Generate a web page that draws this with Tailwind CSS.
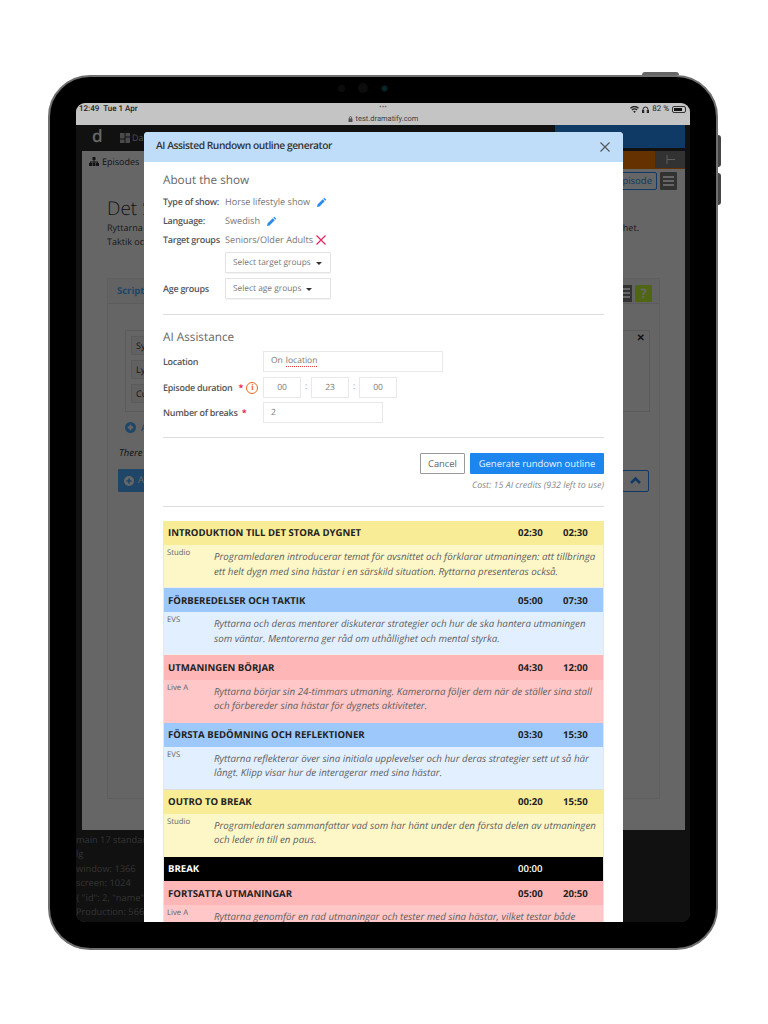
<!DOCTYPE html>
<html lang="en">
<head>
  <meta charset="UTF-8">
  <title>Dramatify on iPad</title>
  <script src="https://cdn.jsdelivr.net/npm/@tailwindcss/browser@4"></script>
</head>
<body class="bg-white font-['Open_Sans',sans-serif] overflow-hidden [text-rendering:geometricPrecision]">
<div class="w-[768px] h-[1024px] pt-[75px] pl-[48px]">
  <!-- device -->
  <div class="relative w-[670px] h-[875px] rounded-[42px] bg-black border-2 border-[#6f6f6f] p-[26px]">
    <div class="absolute -top-[5px] left-[592px] w-[37px] h-[3px] bg-[#666] rounded-t-sm"></div>
    <div class="absolute -right-[5px] top-[58px] w-[3px] h-[32px] bg-[#444] rounded-r-sm"></div>
    <div class="absolute -right-[5px] top-[96px] w-[3px] h-[32px] bg-[#444] rounded-r-sm"></div>
    <div class="absolute top-[6px] left-[288px] flex items-center gap-[13px]">
      <div class="w-[7px] h-[7px] rounded-full bg-[#0c0c0c]"></div>
      <div class="w-[10px] h-[10px] rounded-full bg-[#0c0c0c]"></div>
      <div class="w-[7px] h-[7px] rounded-full bg-[#06282c] border border-[#0d0d0d]"></div>
    </div>

    <!-- screen -->
    <div class="relative w-[614px] h-[819px] rounded-[9px] overflow-hidden bg-[#343434] flex flex-col">
      <!-- ipad status bar -->
      <div class="h-[22px] bg-[#c4c4c4] relative shrink-0 text-[#222]">
        <div class="absolute left-[3px] top-0 text-[8px] leading-[11px] font-medium font-['Roboto',sans-serif]">12:49&nbsp;&nbsp;Tue 1 Apr</div>
        <div class="absolute left-0 right-0 top-0 text-center text-[7px] leading-[10px] text-[#666]">•••</div>
        <div class="absolute left-0 right-0 top-[10px] flex justify-center items-center gap-[3px] text-[7.5px] leading-[11px] font-['Roboto',sans-serif] text-[#444]">
          <svg class="w-[5px] h-[6px]" viewBox="0 0 10 12" fill="#555"><path d="M2 5V3.500a3 3 0 0 1 6 0V5h1v7H1V5zM3.500 5h3V3.500a1.500 1.500 0 0 0-3 0z"/></svg>
          <span>test.dramatify.com</span>
        </div>
        <div class="absolute right-[4px] top-[1px] flex items-center gap-[3px] text-[8px] leading-[10px] font-['Roboto',sans-serif]">
          <svg class="w-[9px] h-[7px]" viewBox="0 0 18 14" fill="#222"><path d="M9 14l-2.500-3a3.500 3.500 0 0 1 5 0zM4.800 9L3 7a8.500 8.500 0 0 1 12 0l-1.800 2a6 6 0 0 0-8.400 0zM1.800 5.500L0 3.500a12.500 12.500 0 0 1 18 0l-1.800 2a10 10 0 0 0-14.400 0z"/></svg>
          <svg class="w-[7px] h-[7px]" viewBox="0 0 14 14" fill="none" stroke="#222" stroke-width="2"><path d="M2 11V7a5 5 0 0 1 10 0v4"/><rect x="1" y="9" width="2.500" height="4" fill="#222"/><rect x="10.500" y="9" width="2.500" height="4" fill="#222"/></svg>
          <span>82 %</span>
          <div class="w-[14px] h-[7px] rounded-[2px] border border-[#333] p-[1px]"><div class="w-[82%] h-full bg-[#111]"></div></div>
        </div>
      </div>

      <!-- app behind the dialog -->
      <div class="relative flex-1 bg-[#2b2b2b] text-[#333]">
        <!-- nav -->
        <div class="h-[23px] flex items-center bg-[#2b2b2b] pr-[5px]">
          <div class="w-[26px] text-center text-white text-[17px] leading-[23px] font-semibold pl-[16px] -mt-[2px]">d</div>
          <svg class="w-[10px] h-[10px] ml-[18px] mt-[2px]" viewBox="0 0 10 10" fill="#bbb"><rect width="4.500" height="5.500"/><rect x="5.500" width="4.500" height="3.500"/><rect y="6.500" width="4.500" height="3.500"/><rect x="5.500" y="4.500" width="4.500" height="5.500"/></svg>
          <span class="ml-[2px] mt-[2px] text-[9px] text-[#bbb]">Da</span>
          <div class="ml-auto w-[130px] h-full bg-[#2891ff]"></div>
        </div>
        <!-- page -->
        <div class="absolute left-[6px] top-[26px] w-[603px] h-[679px] bg-white">
          <div class="h-[18px] flex items-center">
            <svg class="w-[10px] h-[9px] ml-[7px] mt-[3px]" viewBox="0 0 20 18" fill="#333"><rect x="7" y="0" width="6" height="6"/><rect x="0" y="12" width="6" height="6"/><rect x="7" y="12" width="6" height="6"/><rect x="14" y="12" width="6" height="6"/><path d="M9 6h2v3h7v3h-2v-1h-5v1H9v-1H4v1H2V9h7z"/></svg>
            <span class="ml-[3px] mt-[3px] text-[9px]">Episodes</span>
            <div class="ml-auto w-[33px] h-full bg-[#ff7b00]"></div>
            <div class="w-[30px] h-full bg-[#7d7d7d] border-b border-[#ff7b00] flex items-center justify-center">
              <svg class="w-[9px] h-[9px]" viewBox="0 0 9 9" stroke="#eee" fill="none"><path d="M1 0v9M1 4.500h8"/></svg>
            </div>
          </div>
          <div class="flex justify-end items-center gap-[3px] pr-[8px] mt-[3px]">
            <div class="h-[18px] px-[4px] rounded-[2px] border border-[#2891ff] text-[#2891ff] text-[9.5px] leading-[16px]">New episode</div>
            <div class="w-[17px] h-[18px] bg-[#7d7d7d] rounded-[1px] flex flex-col justify-center items-center gap-[2px]">
              <div class="w-[11px] h-[2px] bg-white"></div><div class="w-[11px] h-[2px] bg-white"></div><div class="w-[11px] h-[2px] bg-white"></div>
            </div>
          </div>
          <div class="pl-[25px] mt-[5px]">
            <div class="text-[19px] leading-[26px] font-light">Det Stora Dygnet</div>
            <div class="w-[532px] text-[9px] leading-[14px] text-[#444] flex justify-between"><span>Ryttarna</span><span>enhet.</span></div>
            <div class="text-[9px] leading-[14px] text-[#444]">Taktik och</div>
          </div>
          <!-- script card -->
          <div class="mt-[29px] ml-[25px] w-[553px] h-[521px] border border-[#eee] bg-[#fdfdfd] relative">
            <div class="h-[25px] border-b border-[#e6e6e6] bg-[#f7f7f7] flex items-center pl-[9px] pr-[7px]">
              <span class="text-[9.500px] font-bold text-[#4fb0ff]">Script</span>
              <div class="ml-auto w-[14px] h-[17px] mt-[4px] bg-[#7d7d7d] flex flex-col justify-center items-center gap-[2px]">
                <div class="w-[10px] h-[2px] bg-white"></div><div class="w-[10px] h-[2px] bg-white"></div><div class="w-[10px] h-[2px] bg-white"></div>
              </div>
              <div class="ml-[3px] w-[17px] h-[17px] mt-[4px] bg-[#c8ff30] text-white text-[13px] leading-[17px] font-bold text-center">?</div>
            </div>
            <div class="ml-[17px] mt-[26px] w-[525px] h-[82px] border border-[#e3e3e3] relative p-[5px] flex flex-col gap-[5px]">
              <div class="h-[19px] w-[60px] bg-[#f3f3f3] border border-[#e3e3e3] text-[9px] leading-[17px] pl-[4px]">Sy</div>
              <div class="h-[19px] w-[60px] bg-[#f3f3f3] border border-[#e3e3e3] text-[9px] leading-[17px] pl-[4px]">Ly</div>
              <div class="h-[19px] w-[60px] bg-[#f3f3f3] border border-[#e3e3e3] text-[9px] leading-[17px] pl-[4px]">Cu</div>
              <div class="absolute right-[4px] top-0 text-[10px] font-bold leading-[12px]">✕</div>
            </div>
            <div class="ml-[17px] mt-[9px] flex items-center gap-[5px] text-[#4fb0ff] text-[9px] leading-[13px] font-semibold">
              <svg class="w-[11px] h-[11px]" viewBox="0 0 12 12"><circle cx="6" cy="6" r="6" fill="#4fb0ff"/><path d="M6 3v6M3 6h6" stroke="#fff" stroke-width="2"/></svg>
              <span>Add</span>
            </div>
            <div class="ml-[11px] mt-[12px] text-[9.500px] leading-[13px] italic">There are</div>
            <div class="flex justify-between items-center mt-[10px] mx-[10px]">
              <div class="h-[23px] bg-[#4fb0ff] rounded-[1px] flex items-center gap-[4px] px-[6px] text-white text-[9.500px]">
                <svg class="w-[10px] h-[10px]" viewBox="0 0 12 12"><circle cx="6" cy="6" r="6" fill="#fff"/><path d="M6 3v6M3 6h6" stroke="#4fb0ff" stroke-width="2"/></svg>
                <span>Add</span>
              </div>
              <div class="w-[27px] h-[22px] rounded-[2px] border border-[#2891ff] flex items-center justify-center">
                <svg class="w-[11px] h-[7px]" viewBox="0 0 11 7" fill="none" stroke="#2891ff" stroke-width="2.500"><path d="M1 6l4.500-4.500L10 6"/></svg>
              </div>
            </div>
          </div>
        </div>
        <!-- debug output under the page -->
        <div class="absolute left-0 top-[708px] text-[9.250px] leading-[14.400px] text-[#808080] whitespace-nowrap">
          <div>main 17 standard</div>
          <div>lg</div>
          <div>window: 1366</div>
          <div>screen: 1024</div>
          <div>{ "id": 2, "name": "Pro" }</div>
          <div>Production: 566</div>
          <div>episode: 4541</div>
        </div>
        <div class="absolute inset-0 bg-black/60"></div>
      </div>

      <!-- dialog -->
      <div class="absolute left-[68px] top-[29px] w-[479px] h-[790px] bg-white rounded-t-[4px] overflow-hidden">
        <div class="h-[30px] bg-[#bfdcf8] flex items-center justify-between pl-[12px] pr-[13px]">
          <span class="text-[10.250px] font-semibold text-[#333] tracking-[-0.45px]">AI Assisted Rundown outline generator</span>
          <svg class="w-[10px] h-[10px]" viewBox="0 0 10 10" stroke="#555" stroke-width="1.100" fill="none"><path d="M0.500 0.500l9 9M9.500 0.500l-9 9"/></svg>
        </div>
        <div class="px-[19px] text-[9.150px] text-[#666]">
          <div class="mt-[9px] text-[11.750px] leading-[18px] text-[#666]">About the show</div>
          <div class="mt-[3px] flex items-center h-[19px]">
            <span class="w-[62px] mt-px font-semibold text-[#555] text-[9px] tracking-[-0.27px] whitespace-nowrap">Type of show:</span>
            <span class="text-[#777]">Horse lifestyle show</span>
            <svg class="ml-[7px] w-[10px] h-[10px]" viewBox="0 0 10 10" fill="#2a8bea"><path d="M7.300 0.700l2 2-1 1-2-2zM5.700 2.300l2 2L2.500 9.500 0 10l0.500-2.500z"/></svg>
          </div>
          <div class="flex items-center h-[19px]">
            <span class="w-[62px] mt-px font-semibold text-[#555] text-[9px] tracking-[-0.27px]">Language:</span>
            <span class="text-[#777]">Swedish</span>
            <svg class="ml-[7px] w-[10px] h-[10px]" viewBox="0 0 10 10" fill="#2a8bea"><path d="M7.300 0.700l2 2-1 1-2-2zM5.700 2.300l2 2L2.500 9.500 0 10l0.500-2.500z"/></svg>
          </div>
          <div class="flex items-center h-[19px]">
            <span class="w-[62px] mt-px font-semibold text-[#555] text-[9px] tracking-[-0.27px] whitespace-nowrap">Target groups</span>
            <span class="text-[#777]">Seniors/Older Adults</span>
            <svg class="ml-[3px] w-[10px] h-[10px]" viewBox="0 0 10 10" stroke="#e0245e" stroke-width="1.200" fill="none"><path d="M0.500 0.500l9 9M9.500 0.500l-9 9"/></svg>
          </div>
          <div class="mt-[3px] ml-[62px] w-[106px] h-[21px] pt-px border border-[#e3e3e3] rounded-[1px] shadow-[0_1px_1px_rgba(0,0,0,0.05)] flex items-center pl-[7px] text-[#777] text-[8.350px] whitespace-nowrap">
            Select target groups
            <span class="ml-[5px] w-0 h-0 border-x-[3px] border-x-transparent border-t-[3px] border-t-[#333]"></span>
          </div>
          <div class="mt-[5px] flex items-center">
            <span class="w-[62px] mt-px font-semibold text-[#555] text-[9px] tracking-[-0.27px]">Age groups</span>
            <div class="w-[106px] h-[21px] pt-px border border-[#e3e3e3] rounded-[1px] shadow-[0_1px_1px_rgba(0,0,0,0.05)] flex items-center pl-[7px] text-[#777] text-[8.350px] whitespace-nowrap">
              Select age groups
              <span class="ml-[5px] w-0 h-0 border-x-[3px] border-x-transparent border-t-[3px] border-t-[#333]"></span>
            </div>
          </div>
          <div class="mt-[15px] h-px bg-[#ddd]"></div>

          <div class="mt-[13px] text-[11.750px] leading-[18px]">AI Assistance</div>
          <div class="mt-[5px] flex items-center">
            <span class="w-[100px] mt-px font-semibold text-[#555] text-[9px] tracking-[-0.27px]">Location</span>
            <div class="w-[180px] h-[21px] border border-[#e8e8e8] flex items-center pl-[7px] text-[#777] text-[8.500px]">On <span class="ml-[3px] leading-[10px] border-b border-dotted border-[#e04040]">location</span></div>
          </div>
          <div class="mt-[5px] flex items-center">
            <span class="w-[100px] mt-px font-semibold text-[#555] text-[9px] tracking-[-0.27px] flex items-center whitespace-nowrap">Episode duration
              <span class="ml-[6px] text-[#e0103a]">*</span>
              <span class="ml-[3px] w-[12px] h-[12px] rounded-full border-[1.5px] border-[#e8691c] text-[#e8691c] text-[8.500px] leading-[9px] font-bold font-['Liberation_Serif',serif] text-center shrink-0">i</span>
            </span>
            <div class="w-[38px] h-[21px] border border-[#e8e8e8] text-[#777] text-[8.500px] leading-[19px] text-center">00</div>
            <span class="w-[10px] text-center text-[#888] text-[8.500px]">:</span>
            <div class="w-[38px] h-[21px] border border-[#e8e8e8] text-[#777] text-[8.500px] leading-[19px] text-center">23</div>
            <span class="w-[10px] text-center text-[#888] text-[8.500px]">:</span>
            <div class="w-[38px] h-[21px] border border-[#e8e8e8] text-[#777] text-[8.500px] leading-[19px] text-center">00</div>
          </div>
          <div class="mt-[4px] flex items-center">
            <span class="w-[100px] mt-px font-semibold text-[#555] text-[9px] tracking-[-0.27px]">Number of breaks <span class="ml-[2px] text-[#e0103a]">*</span></span>
            <div class="w-[120px] h-[21px] border border-[#e8e8e8] text-[#777] text-[8.500px] leading-[19px] pl-[7px]">2</div>
          </div>
          <div class="mt-[14px] h-px bg-[#ddd]"></div>

          <div class="mt-[15px] flex justify-end gap-[5px]">
            <div class="w-[45px] h-[21px] border border-[#999] rounded-[1px] text-center text-[9.400px] leading-[19px] text-[#666]">Cancel</div>
            <div class="w-[134px] h-[21px] bg-[#1c86ee] rounded-[1px] text-center text-[9.450px] leading-[21px] text-[#e8f2fd]">Generate rundown outline</div>
          </div>
          <div class="mt-[5px] text-right italic text-[8.900px] leading-[12px] text-[#888]">Cost: 15 AI credits (932 left to use)</div>
          <div class="mt-[15px] h-px bg-[#ddd]"></div>

          <!-- rundown -->
          <div class="mt-[14px] border-x border-[#e6e6e6]">
            <div class="h-[24.200px] pt-px bg-[#f8ec96] flex items-center pl-[4px] font-bold text-[#222] text-[9.600px]"><span class="flex-1">INTRODUKTION TILL DET STORA DYGNET</span><span class="w-[45px]">02:30</span><span class="w-[40px]">02:30</span></div>
            <div class="h-[43px] bg-[#fdf7c7] flex border-b border-[#eee]">
              <span class="w-[50px] pl-[3px] pt-[3px] text-[7.750px] leading-[11px]">Studio</span>
              <p class="w-[383px] pt-[5px] italic text-[9.750px] leading-[14.400px] text-[#5f5f5f]">Programledaren introducerar temat för avsnittet och förklarar utmaningen: att tillbringa ett helt dygn med sina hästar i en särskild situation. Ryttarna presenteras också.</p>
            </div>
            <div class="h-[24.200px] pt-px bg-[#9cc8fb] flex items-center pl-[4px] font-bold text-[#222] text-[9.600px]"><span class="flex-1">FÖRBEREDELSER OCH TAKTIK</span><span class="w-[45px]">05:00</span><span class="w-[40px]">07:30</span></div>
            <div class="h-[43px] bg-[#e2effe] flex border-b border-[#eee]">
              <span class="w-[50px] pl-[3px] pt-[3px] text-[7.750px] leading-[11px]">EVS</span>
              <p class="w-[383px] pt-[5px] italic text-[9.750px] leading-[14.400px] text-[#5f5f5f]">Ryttarna och deras mentorer diskuterar strategier och hur de ska hantera utmaningen som väntar. Mentorerna ger råd om uthållighet och mental styrka.</p>
            </div>
            <div class="h-[24.200px] pt-px bg-[#ffb6b6] flex items-center pl-[4px] font-bold text-[#222] text-[9.600px]"><span class="flex-1">UTMANINGEN BÖRJAR</span><span class="w-[45px]">04:30</span><span class="w-[40px]">12:00</span></div>
            <div class="h-[43px] bg-[#ffc7c8] flex">
              <span class="w-[50px] pl-[3px] pt-[3px] text-[7.750px] leading-[11px]">Live A</span>
              <p class="w-[383px] pt-[5px] italic text-[9.750px] leading-[14.400px] text-[#5f5f5f]">Ryttarna börjar sin 24-timmars utmaning. Kamerorna följer dem när de ställer sina stall och förbereder sina hästar för dygnets aktiviteter.</p>
            </div>
            <div class="h-[24.200px] pt-px bg-[#9cc8fb] flex items-center pl-[4px] font-bold text-[#222] text-[9.600px]"><span class="flex-1">FÖRSTA BEDÖMNING OCH REFLEKTIONER</span><span class="w-[45px]">03:30</span><span class="w-[40px]">15:30</span></div>
            <div class="h-[43px] bg-[#e2effe] flex border-b border-[#ddd]">
              <span class="w-[50px] pl-[3px] pt-[3px] text-[7.750px] leading-[11px]">EVS</span>
              <p class="w-[383px] pt-[5px] italic text-[9.750px] leading-[14.400px] text-[#5f5f5f]">Ryttarna reflekterar över sina initiala upplevelser och hur deras strategier sett ut så här långt. Klipp visar hur de interagerar med sina hästar.</p>
            </div>
            <div class="h-[24.200px] pt-px bg-[#f8ec96] flex items-center pl-[4px] font-bold text-[#222] text-[9.600px]"><span class="flex-1">OUTRO TO BREAK</span><span class="w-[45px]">00:20</span><span class="w-[40px]">15:50</span></div>
            <div class="h-[43px] bg-[#fdf7c7] flex">
              <span class="w-[50px] pl-[3px] pt-[3px] text-[7.750px] leading-[11px]">Studio</span>
              <p class="w-[383px] pt-[5px] italic text-[9.750px] leading-[14.400px] text-[#5f5f5f]">Programledaren sammanfattar vad som har hänt under den första delen av utmaningen och leder in till en paus.</p>
            </div>
            <div class="h-[24.200px] pt-px bg-black flex items-center pl-[4px] font-bold text-white text-[9.600px]"><span class="flex-1">BREAK</span><span class="w-[45px] font-semibold">00:00</span><span class="w-[40px]"></span></div>
            <div class="h-[24.200px] pt-px bg-[#ffb6b6] flex items-center pl-[4px] font-bold text-[#222] text-[9.600px]"><span class="flex-1">FORTSATTA UTMANINGAR</span><span class="w-[45px]">05:00</span><span class="w-[40px]">20:50</span></div>
            <div class="h-[43px] bg-[#ffc7c8] flex">
              <span class="w-[50px] pl-[3px] pt-[3px] text-[7.750px] leading-[11px]">Live A</span>
              <p class="w-[383px] pt-[5px] italic text-[9.750px] leading-[14.400px] text-[#5f5f5f]">Ryttarna genomför en rad utmaningar och tester med sina hästar, vilket testar både deras styrka.</p>
            </div>
          </div>
        </div>
      </div>
    </div>
  </div>
</div>
</body>
</html>
